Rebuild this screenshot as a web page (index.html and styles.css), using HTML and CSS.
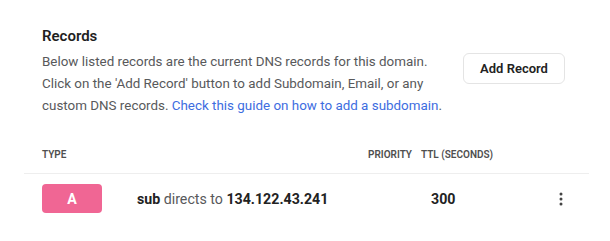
FILE: index.html
```html
<!DOCTYPE html>
<html lang="en">
<head>
    <meta charset="UTF-8">
    <meta name="viewport" content="width=device-width, initial-scale=1.0">
    <title>DNS Records</title>
    <link rel="stylesheet" href="styles.css">
</head>
<body>
    <div class="panel">
        <div class="intro">
            <div class="intro-text">
                <h2>Records</h2>
                <p>Below listed records are the current DNS records for this domain. Click on the 'Add Record' button to add Subdomain, Email, or any custom DNS records. <a href="#">Check this guide on how to add a subdomain</a>.</p>
            </div>
            <button class="add-btn">Add Record</button>
        </div>

        <div class="records">
            <div class="row head">
                <div>TYPE</div>
                <div></div>
                <div>PRIORITY</div>
                <div>TTL (SECONDS)</div>
                <div></div>
            </div>
            <div class="row">
                <div><span class="badge">A</span></div>
                <div class="target"><b>sub</b> directs to <b>134.122.43.241</b></div>
                <div></div>
                <div class="ttl">300</div>
                <div class="menu">
                    <svg width="4" height="14" viewBox="0 0 4 14">
                        <circle cx="2" cy="2" r="1.5" fill="#444"/>
                        <circle cx="2" cy="7" r="1.5" fill="#444"/>
                        <circle cx="2" cy="12" r="1.5" fill="#444"/>
                    </svg>
                </div>
            </div>
        </div>
    </div>
</body>
</html>
```

FILE: styles.css
```css
body {
    margin: 0;
    font-family: Roboto, "Liberation Sans", sans-serif;
    background-color: #fff;
    color: #222;
}
.panel {
    margin: 0 21px 0 24px;
}
.intro {
    display: flex;
    justify-content: space-between;
    align-items: flex-start;
    padding: 26px 24px 0 18px;
}
.intro-text {
    width: 410px;
}
.intro h2 {
    margin: 0;
    font-size: 15px;
    line-height: 20px;
    font-weight: 600;
    color: #1f1f1f;
}
.intro p {
    margin: 5px 0 0 0;
    font-size: 13.4px;
    line-height: 22px;
    color: #58595b;
}
.intro a {
    color: #3d6ddf;
    text-decoration: none;
}
.add-btn {
    margin-top: 27px;
    width: 102px;
    height: 31px;
    padding: 0;
    background-color: #fff;
    border: 1px solid #e4e4e4;
    border-radius: 6px;
    font-family: inherit;
    font-size: 13px;
    font-weight: 600;
    color: #222;
}
.records {
    margin-top: 31px;
}
.row {
    display: grid;
    grid-template-columns: 113px 231px 53px 1fr 16px;
    align-items: center;
    padding: 0 20px 0 0;
}
.row > div:first-child {
    padding-left: 18px;
}
.head {
    font-size: 10px;
    line-height: 14px;
    font-weight: 600;
    color: #4f4f4f;
    padding-bottom: 11px;
    border-bottom: 1px solid #eeeeee;
}
.row:not(.head) {
    padding-top: 10px;
    font-size: 14.2px;
}
.badge {
    display: flex;
    align-items: center;
    justify-content: center;
    width: 60px;
    height: 29px;
    border-radius: 4px;
    background-color: #f06694;
    color: #fff;
    font-weight: 700;
}
.target {
    color: #58595b;
}
.target b {
    color: #222;
    font-weight: 700;
}
.ttl {
    padding-left: 10px;
    font-weight: 700;
}
.menu {
    display: flex;
    justify-content: center;
}
.menu svg {
    display: block;
}
```
